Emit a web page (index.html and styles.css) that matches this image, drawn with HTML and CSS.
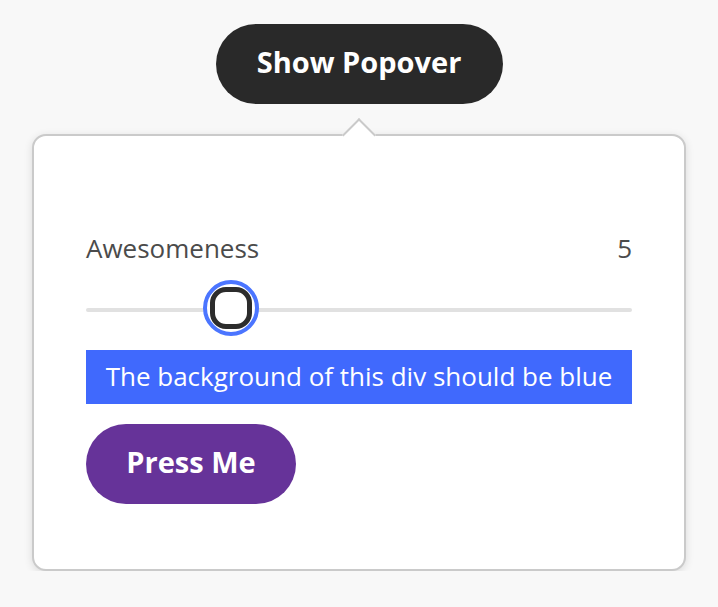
FILE: index.html
```html
<!DOCTYPE html>
<html>
<head>
<meta charset="utf-8">
<link rel="stylesheet" href="styles.css">
</head>
<body>
<div class="page">
  <button class="trigger">Show Popover</button>
  <div class="popover">
    <div class="tip"></div>
    <div class="field">
      <div class="field-head">
        <span class="label">Awesomeness</span>
        <span class="value">5</span>
      </div>
      <div class="slider">
        <div class="track"></div>
        <div class="thumb" style="left: 26.5%"><div class="knob"></div></div>
      </div>
    </div>
    <div class="blue">The background of this div should be blue</div>
    <button class="press">Press Me</button>
  </div>
</div>
</body>
</html>
```
FILE: styles.css
```css
html, body {
  margin: 0;
  padding: 0;
  background: #f8f8f8;
  font-family: "Open Sans", "Noto Sans", sans-serif;
}
.page {
  display: flex;
  flex-direction: column;
  align-items: center;
  padding-top: 24px;
}
.trigger {
  width: 287px;
  height: 80px;
  border: none;
  border-radius: 40px;
  background: #292929;
  color: #fff;
  font-family: inherit;
  font-weight: 700;
  font-size: 29px;
  padding: 0 0 6px;
}
.popover {
  position: relative;
  margin-top: 30px;
  width: 654px;
  height: 437px;
  box-sizing: border-box;
  background: #fff;
  border: 2px solid #cacaca;
  border-radius: 14px;
  box-shadow: 0 2px 8px rgba(0,0,0,0.12);
  padding: 0 52px;
  display: flex;
  flex-direction: column;
  align-items: flex-start;
}
.tip {
  position: absolute;
  left: 50%;
  top: -13px;
  width: 22px;
  height: 22px;
  margin-left: -12px;
  background: #fff;
  border-left: 2px solid #cacaca;
  border-top: 2px solid #cacaca;
  transform: rotate(45deg);
}
.field {
  width: 100%;
  margin-top: 96px;
}
.field-head {
  display: flex;
  justify-content: space-between;
  font-size: 26px;
  color: #4b4b4b;
  line-height: 32px;
}
.slider {
  position: relative;
  height: 64px;
  margin-top: 10px;
}
.track {
  position: absolute;
  left: 0;
  right: 0;
  top: 34px;
  height: 4px;
  border-radius: 2px;
  background: #e1e1e1;
}
.thumb {
  position: absolute;
  top: 6px;
  width: 56px;
  height: 56px;
  margin-left: -28px;
  box-sizing: border-box;
  border: 4px solid #4b75ff;
  border-radius: 50%;
  background: #fff;
  display: flex;
  align-items: center;
  justify-content: center;
}
.knob {
  width: 42px;
  height: 42px;
  box-sizing: border-box;
  border: 5px solid #2c2c2c;
  border-radius: 16px;
  background: #fff;
}
.blue {
  width: 100%;
  height: 54px;
  margin-top: 12px;
  background: #4069fd;
  color: #fff;
  font-size: 26px;
  line-height: 52px;
  text-align: center;
}
.press {
  margin-top: 20px;
  width: 210px;
  height: 80px;
  border: none;
  border-radius: 40px;
  background: #663399;
  color: #fff;
  font-family: inherit;
  font-weight: 700;
  font-size: 29px;
  padding: 0 0 6px;
}
```
